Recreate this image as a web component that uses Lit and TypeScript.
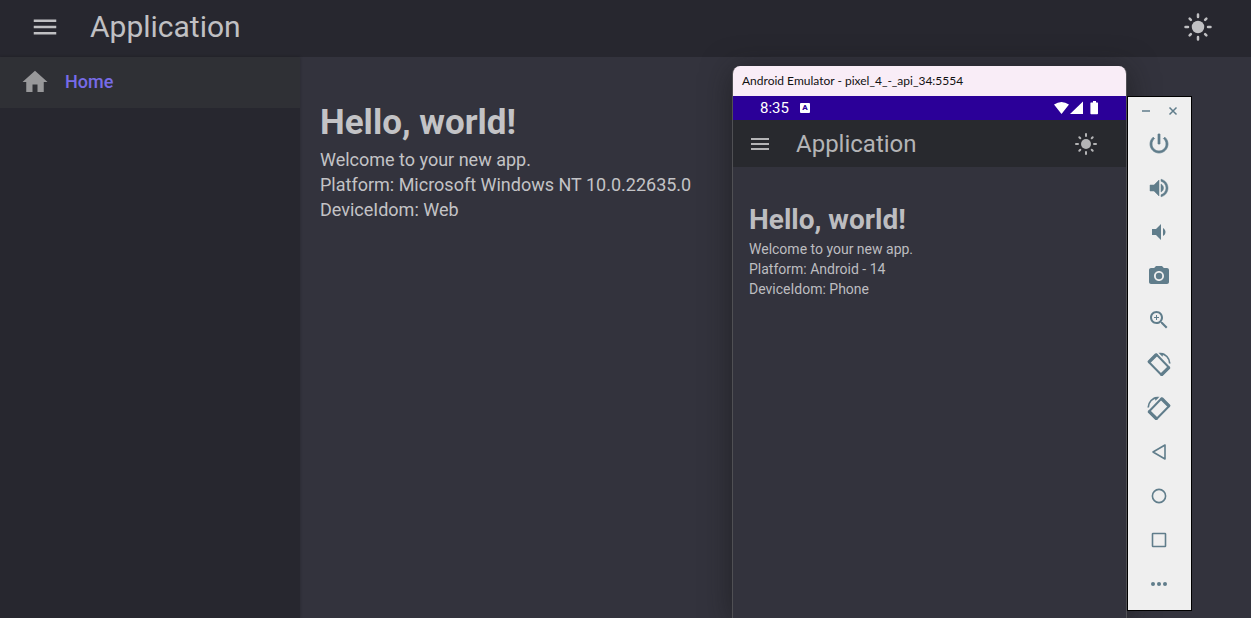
import { LitElement, html, css, svg } from "lit";
import { customElement, property } from "lit/decorators.js";

const sun = svg`
  <circle cx="12" cy="12" r="5" fill="currentColor" />
  <path d="M12 2v2M12 20v2M2 12h2M20 12h2M5.3 5.3l1 1M17.7 17.7l1 1M5.3 18.7l1-1M17.7 6.3l1-1"
    fill="none" stroke="currentColor" stroke-width="2" stroke-linecap="round" />`;
const menu = svg`<path fill="currentColor" d="M3 18h18v-2H3v2zm0-5h18v-2H3v2zm0-7v2h18V6H3z" />`;
const home = svg`<path fill="currentColor" d="M10 20v-6h4v6h5v-8h3L12 3 2 12h3v8z" />`;

const rotateGlyph = svg`
  <path fill="none" stroke="currentColor" stroke-width="2" stroke-linejoin="round" d="M9.500 2.500 1.800 10 14.500 23 22 15.500Z" />
  <path fill="none" stroke="currentColor" stroke-width="3.400" stroke-linecap="round" d="M2.400 9.600 9 3M14.900 22.400 21.500 15.900" />
  <path fill="none" stroke="currentColor" stroke-width="1.700" d="M13.500 1.700C18.500 1.700 22.500 6 22.800 11.500" />
  <path fill="currentColor" d="M11.500.8 16.500.9 15.500 4.800z" />`;

const tools = [
  { label: "Power", icon: svg`<path fill="currentColor" d="M13 2h-2v10h2V2zm4.83 3.17-1.42 1.42C17.99 7.86 19 9.81 19 12c0 3.87-3.13 7-7 7s-7-3.13-7-7c0-2.19 1.01-4.14 2.58-5.42L6.17 5.17C4.23 6.82 3 9.26 3 12c0 4.97 4.03 9 9 9s9-4.03 9-9c0-2.74-1.23-5.18-3.17-6.83z" stroke="currentColor" stroke-width=".7" />` },
  { label: "Volume up", icon: svg`<path fill="currentColor" d="M3 9v6h4l5 5V4L7 9H3zm13.5 3c0-1.77-1.02-3.29-2.5-4.03v8.05c1.48-.73 2.5-2.25 2.5-4.02zM14 3.23v2.06c2.89.86 5 3.54 5 6.71s-2.11 5.85-5 6.71v2.06c4.01-.91 7-4.49 7-8.77s-2.99-7.86-7-8.77z" stroke="currentColor" stroke-width=".5" />` },
  { label: "Volume down", icon: svg`<path fill="currentColor" d="M18.5 12c0-1.77-1.02-3.29-2.5-4.03v8.05c1.48-.73 2.5-2.25 2.5-4.02zM5 9v6h4l5 5V4L9 9H5z" />` },
  { label: "Take screenshot", icon: svg`<circle cx="12" cy="12" r="3.2" fill="currentColor" /><path fill="currentColor" d="M9 2 7.17 4H4c-1.1 0-2 .9-2 2v12c0 1.1.9 2 2 2h16c1.1 0 2-.9 2-2V6c0-1.100-.9-2-2-2h-3.170L15 2H9zm3 15c-2.760 0-5-2.240-5-5s2.240-5 5-5 5 2.240 5 5-2.240 5-5 5z" />` },
  { label: "Zoom", icon: svg`<path fill="currentColor" d="m15.500 14h-.79l-.28-.27C15.410 12.590 16 11.110 16 9.500 16 5.910 13.090 3 9.500 3S3 5.910 3 9.500 5.910 16 9.500 16c1.610 0 3.090-.59 4.230-1.570l.27.28v.79l5 4.990L20.490 19l-4.990-5zm-6 0C7.010 14 5 11.990 5 9.500S7.010 5 9.500 5 14 7.010 14 9.500 11.990 14 9.500 14zm2.500-4h-2v2H9v-2H7V9h2V7h1v2h2v1z" />` },
  { label: "Rotate left", icon: rotateGlyph },
  { label: "Rotate right", icon: svg`<g transform="matrix(-1 0 0 1 24 0)">${rotateGlyph}</g>` },
  { label: "Back", icon: svg`<path fill="none" stroke="currentColor" stroke-width="1.600" stroke-linejoin="round" d="M18 5v14L6 12z" />` },
  { label: "Home", icon: svg`<circle cx="12" cy="12" r="6.600" fill="none" stroke="currentColor" stroke-width="1.600" />` },
  { label: "Overview", icon: svg`<rect x="5.500" y="5.500" width="13" height="13" rx=".5" fill="none" stroke="currentColor" stroke-width="1.600" />` },
  { label: "More", icon: svg`<g fill="currentColor"><circle cx="6" cy="12" r="2" /><circle cx="12" cy="12" r="2" /><circle cx="18" cy="12" r="2" /></g>` },
];

const shared = css`
  * { box-sizing: border-box; }
  button {
    display: grid;
    place-items: center;
    margin: 0;
    padding: 0;
    border: 0;
    background: none;
    color: inherit;
    font: inherit;
    cursor: pointer;
  }
  svg { display: block; }
`;

@customElement("app-bar")
export class AppBar extends LitElement {
  @property({ type: Boolean, reflect: true }) compact = false;

  static styles = [shared, css`
    :host {
      display: flex;
      align-items: center;
      height: 57px;
      padding: 0 23px 3px 15px;
      background: #27272f;
      color: #c0c0c3;
      font-size: 30px;
    }
    .title { flex: 1; margin: 0 15px; font-size: inherit; font-weight: 400; line-height: 1; }
    .action { width: 60px; height: 54px; }
    .glyph { width: 30px; height: 30px; }
    :host([compact]) {
      height: 47px;
      padding: 0 16px 0 15px;
      background: #28292e;
      color: #b4b4b6;
      font-size: 24px;
    }
    :host([compact]) .title { margin: 0 24px; }
    :host([compact]) .action { width: 24px; height: 47px; }
    :host([compact]) .action:last-child { margin-right: 12px; }
    :host([compact]) .glyph { width: 24px; height: 24px; }
  `];

  render() {
    return html`
      <button class="action" aria-label="Toggle navigation"><svg class="glyph" viewBox="0 0 24 24">${menu}</svg></button>
      <h2 class="title">Application</h2>
      <button class="action" aria-label="Toggle theme"><svg class="glyph" viewBox="0 0 24 24">${sun}</svg></button>
    `;
  }
}

@customElement("welcome-text")
export class WelcomeText extends LitElement {
  @property() platform = "";
  @property() idiom = "";
  @property({ type: Boolean, reflect: true }) compact = false;

  static styles = css`
    :host { display: block; padding: 45px 20px; color: #c3c3c6; font-size: 18px; line-height: 25px; }
    h1 { margin: 0 0 3px; font-size: 35px; line-height: 42px; font-weight: 700; }
    p { margin: 0; }
    :host([compact]) { padding: 36px 16px; color: #bdbdc0; font-size: 14px; line-height: 20px; }
    :host([compact]) h1 { margin-bottom: 2px; font-size: 28px; line-height: 34px; }
  `;

  render() {
    return html`
      <h1>Hello, world!</h1>
      <p>Welcome to your new app.</p>
      <p>Platform: ${this.platform}</p>
      <p>DeviceIdom: ${this.idiom}</p>
    `;
  }
}

@customElement("phone-emulator")
export class PhoneEmulator extends LitElement {
  static styles = [shared, css`
    :host {
      display: flex;
      flex-direction: column;
      overflow: hidden;
      border: 1px solid #505054;
      border-width: 0 1px;
      border-radius: 8px 8px 0 0;
      background: #33333d;
      box-shadow: 0 4px 30px rgba(20, 20, 20, 0.55);
    }
    .caption {
      height: 30px;
      padding: 0 9px;
      background: #f9edf7;
      color: #111;
      font: 12px/30px Lato, "Open Sans", sans-serif;
    }
    .status {
      display: flex;
      align-items: center;
      gap: 11px;
      height: 24px;
      padding: 0 28px 0 27px;
      background: #2b0098;
      color: #fff;
      font-size: 15px;
      line-height: 26px;
    }
    .badge {
      width: 10px;
      height: 10px;
      border-radius: 1px;
      background: #fff;
      color: #2b0098;
      font-size: 8px;
      font-weight: 900;
      line-height: 10px;
      text-align: center;
    }
    .signals { width: 44px; height: 14px; margin-left: auto; }
  `];

  render() {
    return html`
      <div class="caption">Android Emulator - pixel_4_-_api_34:5554</div>
      <div class="status">
        <span>8:35</span><span class="badge">A</span>
        <svg class="signals" viewBox="0 0 44 14" fill="#fff">
          <path d="M0 3.500Q7.500-1.500 15 3.500L7.500 13zM29 .5V13H16zM37 1.500h2V0h3v1.500h1.500q.5 0 .5.500v10.500q0 .8-.8.8h-6q-.8 0-.8-.8V2q0-.5.6-.5z" />
        </svg>
      </div>
      <app-bar compact></app-bar>
      <welcome-text compact platform="Android - 14" idiom="Phone"></welcome-text>
    `;
  }
}

@customElement("emulator-tools")
export class EmulatorTools extends LitElement {
  static styles = [shared, css`
    :host {
      display: block;
      box-sizing: border-box;
      width: 65px;
      padding: 0 1px 4px 0;
      border: 1px solid #000;
      background: #efefef;
      color: #607d8b;
    }
    .window { display: flex; justify-content: center; gap: 11px; height: 25px; padding-top: 6px; }
    .small { width: 16px; height: 16px; }
    .tool { width: 100%; height: 44px; }
    .glyph { width: 24px; height: 24px; }
  `];

  render() {
    return html`
      <div class="window">
        <button class="small" aria-label="Minimize">
          <svg width="16" height="16" viewBox="0 0 16 16"><path d="M4 8h8" stroke="currentColor" stroke-width="1.500" /></svg>
        </button>
        <button class="small" aria-label="Close">
          <svg width="16" height="16" viewBox="0 0 16 16"><path d="m4.500 4.500 7 7m0-7-7 7" stroke="currentColor" stroke-width="1.500" /></svg>
        </button>
      </div>
      ${tools.map((t) => html`
        <button class="tool" aria-label=${t.label}><svg class="glyph" viewBox="0 0 24 24">${t.icon}</svg></button>
      `)}
    `;
  }
}

@customElement("app-root")
export class AppRoot extends LitElement {
  static styles = [shared, css`
    :host {
      position: relative;
      display: flex;
      flex-direction: column;
      height: 100vh;
      overflow: hidden;
      background: #33333d;
      font-family: Roboto, sans-serif;
    }
    .body { display: flex; flex: 1; }
    .drawer { width: 300px; background: #27272f; box-shadow: 0 0 3px rgba(0, 0, 0, 0.25); }
    .link {
      display: flex;
      align-items: center;
      gap: 15px;
      height: 51px;
      padding: 0 20px 2px;
      background: #2f3035;
      color: #776be7;
      font-size: 18px;
      font-weight: 500;
      text-decoration: none;
    }
    .icon { width: 30px; height: 30px; color: #98989a; }
    .content { flex: 1; }
    .phone { position: absolute; top: 66px; right: 124px; bottom: 0; width: 395px; }
    .tools { position: absolute; top: 96px; right: 59px; }
  `];

  render() {
    return html`
      <app-bar></app-bar>
      <div class="body">
        <nav class="drawer">
          <a class="link" href="#"><svg class="icon" viewBox="0 0 24 24">${home}</svg>Home</a>
        </nav>
        <main class="content">
          <welcome-text platform="Microsoft Windows NT 10.0.22635.0" idiom="Web"></welcome-text>
        </main>
      </div>
      <phone-emulator class="phone"></phone-emulator>
      <emulator-tools class="tools"></emulator-tools>
    `;
  }
}
